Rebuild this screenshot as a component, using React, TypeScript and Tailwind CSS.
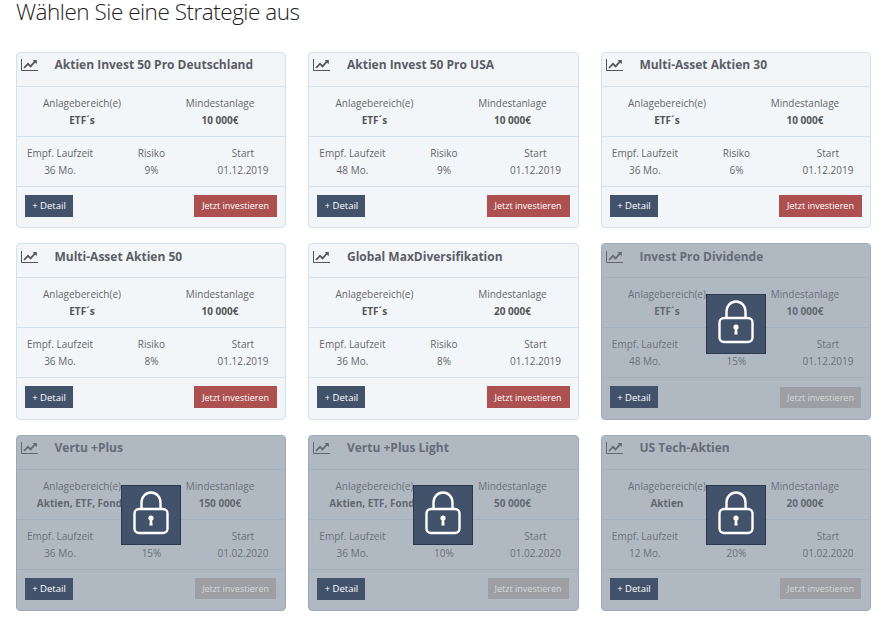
interface Strategy {
  title: string;
  area: string;
  min: string;
  term: string;
  risk: string;
  start: string;
  locked?: boolean;
}

const strategies: Strategy[] = [
  { title: "Aktien Invest 50 Pro Deutschland", area: "ETF´s", min: "10 000€", term: "36 Mo.", risk: "9%", start: "01.12.2019" },
  { title: "Aktien Invest 50 Pro USA", area: "ETF´s", min: "10 000€", term: "48 Mo.", risk: "9%", start: "01.12.2019" },
  { title: "Multi-Asset Aktien 30", area: "ETF´s", min: "10 000€", term: "36 Mo.", risk: "6%", start: "01.12.2019" },
  { title: "Multi-Asset Aktien 50", area: "ETF´s", min: "10 000€", term: "36 Mo.", risk: "8%", start: "01.12.2019" },
  { title: "Global MaxDiversifikation", area: "ETF´s", min: "20 000€", term: "36 Mo.", risk: "8%", start: "01.12.2019" },
  { title: "Invest Pro Dividende", area: "ETF´s", min: "10 000€", term: "48 Mo.", risk: "15%", start: "01.12.2019", locked: true },
  { title: "Vertu +Plus", area: "Aktien, ETF, Fonds", min: "150 000€", term: "36 Mo.", risk: "15%", start: "01.02.2020", locked: true },
  { title: "Vertu +Plus Light", area: "Aktien, ETF, Fonds", min: "50 000€", term: "36 Mo.", risk: "10%", start: "01.02.2020", locked: true },
  { title: "US Tech-Aktien", area: "Aktien", min: "20 000€", term: "12 Mo.", risk: "20%", start: "01.02.2020", locked: true },
];

function ChartIcon() {
  return (
    <svg viewBox="0 0 18 14" className="mt-0.5 h-[14px] w-[18px] shrink-0 text-[#555]" fill="none" stroke="currentColor">
      <path d="M1.5 1v11.5H18" strokeWidth="1" />
      <path d="M4 10l4-4.2 2.6 2.6L15 3.4" strokeWidth="1.7" />
      <path d="M12.6 2h4.2v4.2z" fill="currentColor" stroke="none" />
    </svg>
  );
}

function LockIcon() {
  return (
    <svg viewBox="1 1 58 58" className="h-[58px] w-[58px]" fill="none" stroke="white" strokeWidth="2.4">
      <path d="M20.5 24v-6.5a9.5 10 0 0 1 19 0V24" />
      <rect x="13.5" y="24" width="33" height="24" rx="4.5" />
      <circle cx="30" cy="33" r="2.6" fill="white" stroke="none" />
      <path d="M28.9 34h2.2l.5 6.5h-3.2z" fill="white" stroke="none" />
    </svg>
  );
}

function StrategyCard({ s }: { s: Strategy }) {
  return (
    <div className={`relative h-[176.5px] overflow-hidden rounded border bg-[#f2f6f9] text-[10px] leading-[17px] text-[#666] ${s.locked ? "border-[#9aa8b8]" : "border-[#d5e1ea]"}`}>
      <div className="flex h-[34px] items-start border-b border-[#d5e1ea] pt-[3.5px] pl-[3px]">
        <ChartIcon />
        <h3 className="ml-[16.5px] text-xs leading-[17px] font-bold text-[#5c5c66]">{s.title}</h3>
      </div>
      <div className="grid h-[50px] grid-cols-[130px_130px] content-center gap-x-2 border-b border-[#d5e1ea] pt-px text-center">
        <span>Anlagebereich(e)</span>
        <span>Mindestanlage</span>
        <b className="font-bold text-[#555]">{s.area}</b>
        <b className="font-bold text-[#555]">{s.min}</b>
      </div>
      <div className="grid h-[50px] grid-cols-[86px_86px_86px] content-center gap-x-[5.5px] border-b border-[#d5e1ea] pt-px text-center">
        <span>Empf. Laufzeit</span>
        <span>Risiko</span>
        <span>Start</span>
        <span>{s.term}</span>
        <span>{s.risk}</span>
        <span>{s.start}</span>
      </div>
      <div className="flex items-center justify-between pt-2 pl-2 text-[9px]">
        <button className="relative z-10 h-[22px] w-12 bg-[#42526b] text-[9.5px] font-medium text-white">+ Detail</button>
        {s.locked ? (
          <button className="relative z-10 mr-[9px] h-[21px] w-[81px] bg-[#9d9fa4] text-[#d8d8d8]">Jetzt investieren</button>
        ) : (
          <button className="mr-2 h-[22px] w-[83px] bg-[#ad5050] text-white">Jetzt investieren</button>
        )}
      </div>
      {s.locked && (
        <div className="absolute inset-0 bg-[#6e7b8b]/50">
          <div className="absolute top-[49.5px] left-[104px] flex h-[60px] w-[60px] items-center justify-center border border-[#2c3a4e] bg-[#42526b]">
            <LockIcon />
          </div>
        </div>
      )}
    </div>
  );
}

export default function App() {
  return (
    <div className="min-h-[617px] bg-white pl-4 font-['Open_Sans',sans-serif]">
      <h1 className="mb-[27.5px] h-6 text-[22.5px] leading-6 font-light tracking-[-0.48px] text-[#222]">Wählen Sie eine Strategie aus</h1>
      <div className="grid w-[855px] grid-cols-3 gap-x-[22.4px] gap-y-[15px]">
        {strategies.map((s) => (
          <StrategyCard key={s.title} s={s} />
        ))}
      </div>
    </div>
  );
}
